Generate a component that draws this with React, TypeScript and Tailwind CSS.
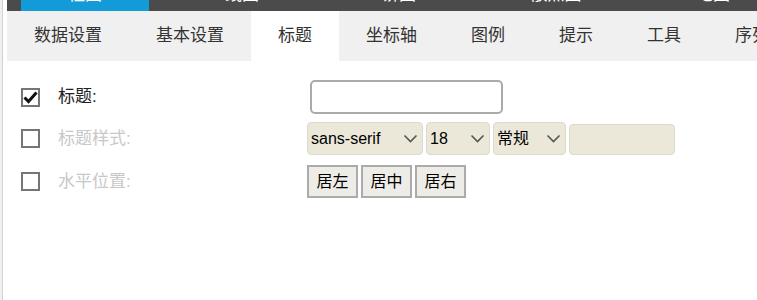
import { ReactNode } from 'react';

const TOP_TABS = ['柱图', '线图', '饼图', '散点图', '地图'];
const TABS = ['数据设置', '基本设置', '标题', '坐标轴', '图例', '提示', '工具', '序列'];

function Chevron() {
   return (
      <svg width="15" height="9" viewBox="0 0 15 9" className="shrink-0">
         <polyline points="1.5,1.5 7.5,7.5 13.5,1.5" fill="none" stroke="#555" strokeWidth="1.6" />
      </svg>
   );
}

function Checkbox({ checked }: { checked?: boolean }) {
   return (
      <div className="w-[19px] h-[19px] border-2 border-[#767676] bg-white flex items-center justify-center shrink-0">
         {checked && (
            <svg width="15" height="13" viewBox="0 0 15 13">
               <path d="M1.5 6.5 L5.5 10.5 L13.5 1.5" fill="none" stroke="#111" strokeWidth="3" strokeLinejoin="miter" />
            </svg>
         )}
      </div>
   );
}

function Select({ value, width }: { value: string; width: string }) {
   return (
      <div className={`${width} h-[33px] bg-[#ebe8da] border border-[#dcdad0] rounded-[4px] flex items-center justify-between pl-[3px] pr-[4px] text-[16px] text-black`}>
         <span>{value}</span>
         <Chevron />
      </div>
   );
}

function Row({ checked, label, disabled, children, className }: { checked?: boolean; label: string; disabled?: boolean; children: ReactNode; className?: string }) {
   return (
      <div className={`flex items-center ${className ?? ''}`}>
         <div className="w-[51px] pl-[14px] flex items-center">
            <Checkbox checked={checked} />
         </div>
         <div className={`w-[249px] text-[17px] ${disabled ? 'text-[#c8c8c8]' : 'text-[#222]'}`}>{label}</div>
         <div className="flex items-end gap-[3px]">{children}</div>
      </div>
   );
}

export default function App() {
   return (
      <div className="h-[300px] w-[757px] overflow-hidden flex bg-[#f0f0f0] pl-[2px] font-['Liberation_Sans','Noto_Sans_CJK_SC',sans-serif]">
         <div className="flex-1 min-w-0 border-l border-[#d2d2d2] bg-white pl-[4px] flex flex-col">
            {/* top chart type tabs, cut off by the viewport */}
            <div className="h-[11px] bg-[#4b4b4b] overflow-hidden flex gap-[29px] pl-[14px] shrink-0">
               {TOP_TABS.map((t, i) => (
                  <div
                     key={t}
                     className={`w-[128px] h-[50px] -mt-[30px] flex items-center justify-center text-[17px] text-white shrink-0 ${i === 0 ? 'bg-[#139bd9]' : ''}`}
                  >
                     {t}
                  </div>
               ))}
            </div>

            {/* settings tabs */}
            <div className="h-[50px] bg-[#f0f0f0] flex overflow-hidden shrink-0">
               {TABS.map((t, i) => (
                  <div
                     key={t}
                     className={`px-[27px] flex items-center text-[17px] text-[#333] whitespace-nowrap shrink-0 ${i === 2 ? 'bg-white' : ''}`}
                  >
                     {t}
                  </div>
               ))}
            </div>

            {/* title settings */}
            <div className="flex flex-col pt-[19px]">
               <Row checked label="标题:">
                  <div className="ml-[3px] w-[193px] h-[34px] border-2 border-[#aaaaaa] rounded-[5px] bg-white" />
               </Row>
               <Row label="标题样式:" disabled className="mt-[8px]">
                  <Select value="sans-serif" width="w-[116px]" />
                  <Select value="18" width="w-[64px]" />
                  <Select value="常规" width="w-[73px]" />
                  <div className="w-[106px] h-[31px] bg-[#ebe8da] border border-[#dcdad0] rounded-[4px]" />
               </Row>
               <Row label="水平位置:" disabled className="mt-[10px]">
                  {['居左', '居中', '居右'].map(b => (
                     <button key={b} className="w-[51px] h-[33px] bg-[#edece6] border-2 border-[#ababab] text-[16px] text-black flex items-center justify-center">
                        {b}
                     </button>
                  ))}
               </Row>
            </div>
         </div>
      </div>
   );
}
